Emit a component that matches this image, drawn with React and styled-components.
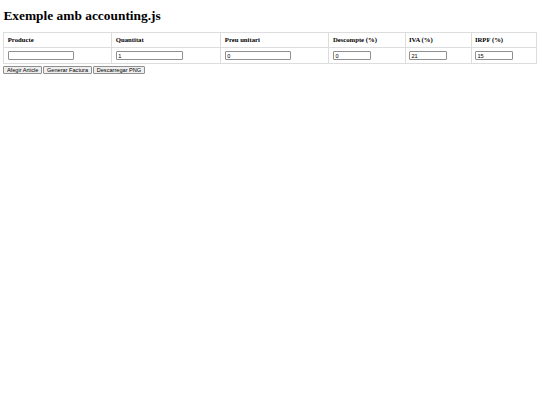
import React, { useState } from "react";
import styled, { createGlobalStyle } from "styled-components";

const GlobalStyle = createGlobalStyle`
  html, body {
    margin: 0;
    padding: 0;
    background: #fff;
  }
  body {
    padding: 0 3.4px;
    font-family: "Liberation Serif", "Times New Roman", serif;
    color: #000;
  }
`;

const Title = styled.h1`
  font-size: 13.4px;
  font-weight: bold;
  margin: 0;
  padding: 8px 0 8px;
  line-height: 15.5px;
`;

const Table = styled.table`
  width: 100%;
  border-collapse: collapse;
  table-layout: fixed;
`;

const Th = styled.th`
  box-sizing: border-box;
  width: ${(p) => p.$w}px;
  border: 1px solid #ddd;
  padding: 3.2px 3.4px;
  text-align: left;
  font-size: 6.7px;
  line-height: 8px;
  font-weight: bold;
  white-space: nowrap;
`;

const Td = styled.td`
  border: 1px solid #ddd;
  padding: 3.4px;
  line-height: 0;
`;

const Input = styled.input`
  box-sizing: border-box;
  width: ${(p) => p.$w}px;
  height: 8.5px;
  margin: 0;
  padding: 0 1.5px;
  border: 1px solid #8f8f8f;
  border-radius: 1px;
  font-family: "Liberation Sans", Arial, sans-serif;
  font-size: 5.6px;
  line-height: 7px;
  color: #000;
  background: #fff;
`;

const Actions = styled.div`
  display: flex;
  gap: 1.7px;
  margin-top: 1.5px;
`;

const Button = styled.button`
  box-sizing: border-box;
  height: 8.8px;
  margin: 0;
  padding: 0 2.5px;
  border: 1px solid #8f8f8f;
  border-radius: 1px;
  background: #efefef;
  font-family: "Liberation Sans", Arial, sans-serif;
  font-size: 5.6px;
  line-height: 6px;
  color: #000;
`;

const columns = [
  { key: "producte", label: "Producte", w: 108, input: 66, value: "" },
  { key: "quantitat", label: "Quantitat", w: 109, input: 67, value: "1" },
  { key: "preu", label: "Preu unitari", w: 108, input: 66, value: "0" },
  { key: "descompte", label: "Descompte (%)", w: 76, input: 38, value: "0" },
  { key: "iva", label: "IVA (%)", w: 66, input: 38, value: "21" },
  { key: "irpf", label: "IRPF (%)", w: 65, input: 38, value: "15" },
];

export default function App() {
  const [row, setRow] = useState(() =>
    Object.fromEntries(columns.map((c) => [c.key, c.value]))
  );

  return (
    <>
      <GlobalStyle />
      <Title>Exemple amb accounting.js</Title>
      <Table>
        <thead>
          <tr>
            {columns.map((c) => (
              <Th key={c.key} $w={c.w}>
                {c.label}
              </Th>
            ))}
          </tr>
        </thead>
        <tbody>
          <tr>
            {columns.map((c) => (
              <Td key={c.key}>
                <Input
                  $w={c.input}
                  value={row[c.key]}
                  onChange={(e) => setRow({ ...row, [c.key]: e.target.value })}
                />
              </Td>
            ))}
          </tr>
        </tbody>
      </Table>
      <Actions>
        <Button>Afegir Article</Button>
        <Button>Generar Factura</Button>
        <Button>Descarregar PNG</Button>
      </Actions>
    </>
  );
}
